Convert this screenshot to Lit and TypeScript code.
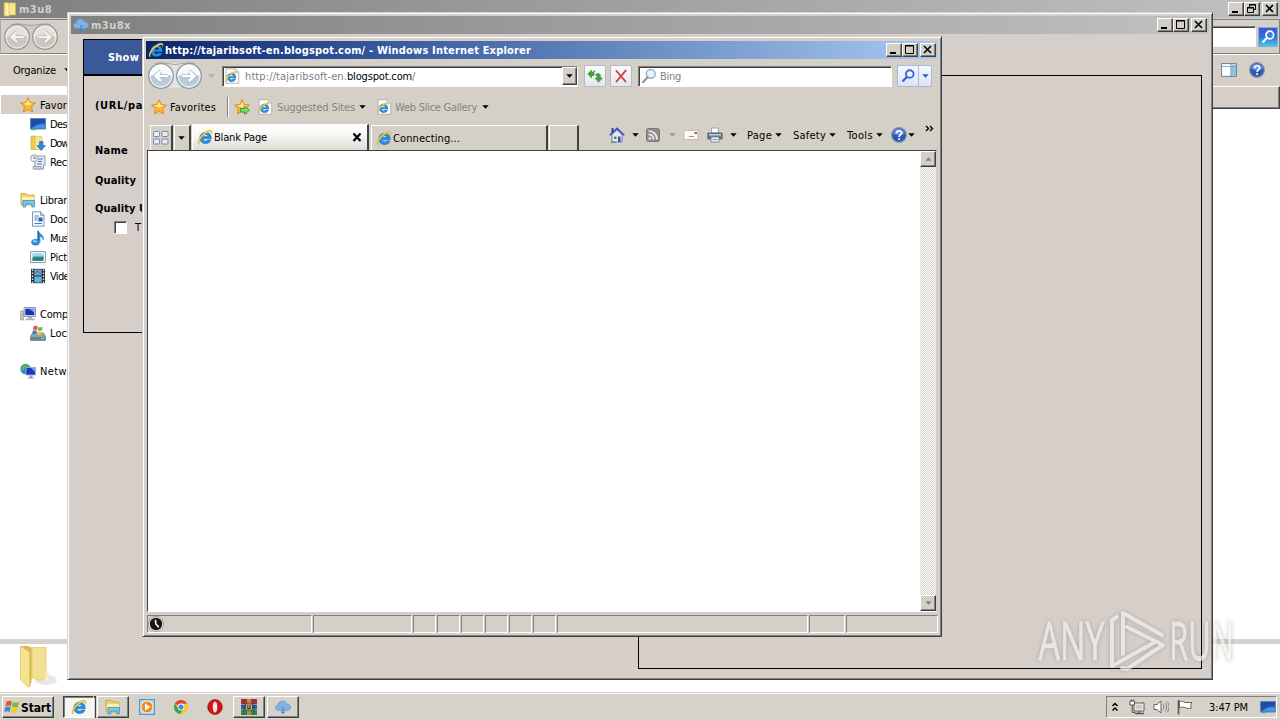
import { LitElement, html, svg, css, TemplateResult, SVGTemplateResult } from "lit";
import { customElement, property } from "lit/decorators.js";
import { classMap } from "lit/directives/class-map.js";

/** A single-line label that tracks its letters so that it fills a given width. */
@customElement("fit-label")
class FitLabel extends LitElement {
  @property({ type: Number }) w = 0;
  static styles = css`
    :host { display: block; flex: none; white-space: pre; padding-top: 1px; margin-bottom: -1px; }
    .t { display: inline-block; }
  `;
  render() {
    return html`<span class="t"><slot></slot></span>`;
  }
  updated() {
    const span = this.renderRoot.querySelector(".t") as HTMLElement;
    const n = (this.textContent || "").length;
    this.style.width = this.w + "px";
    span.style.letterSpacing = "0px";
    const natural = span.getBoundingClientRect().width;
    if (n && natural) span.style.letterSpacing = (this.w - natural) / n + "px";
  }
}

const star = svg`<path d="M8 .8l2.200 4.700 5.200.6-3.800 3.600 1 5.200L8 12.400 3.400 14.900l1-5.200L.6 6.100l5.200-.6z" fill="#fcb92c" stroke="#d9861a" stroke-width=".9"/><path d="M8 2.600l1.500 3.500 3.700.5L8 8.600 2.800 6.600l3.700-.5z" fill="#ffe98c"/>`;
const eGlyph = svg`<path d="M14.3 9.8H6.2c.1 1.5 1.1 2.3 2.4 2.3.9 0 1.6-.4 2-1.1h3.4c-.8 2.3-2.8 3.6-5.4 3.6-3.4 0-5.8-2.3-5.8-5.7S5.200 3.200 8.600 3.200c3.600 0 5.900 2.500 5.700 6.600zM6.300 7.600h4.700c-.1-1.200-1-2-2.300-2s-2.200.8-2.400 2z" fill="#2492e0" stroke="#0d5fb4" stroke-width=".5"/><path d="M2.400 15.200C-.3 14.600 1 9.800 4.800 5.800 8.500 2 13 .1 14.600 1.600c.8.8.5 2.200-.1 3.600.1-1.300-.1-2-.8-2.300-1.500-.5-5 1.300-7.900 4.400-2.800 3-4.400 6.300-3.400 7.900z" fill="#f9cf3b" stroke="#c99a18" stroke-width=".3"/>`;
const folderWin = svg`<path d="M1 1.500h5l1 1.500h7V13H1z" fill="#f0d468" stroke="#c8a53c" stroke-width=".8"/><path d="M2 5h12v3H2z" fill="#fbf0ac"/><path d="M3 15V8.500h11.500V15h-2.700v-3H5.700v3z" fill="#7cc6ec" stroke="#3e8fc0" stroke-width=".8"/>`;
const screen = svg`<path d="M.5 2.500h15v10.500H.5z" fill="#2467c0" stroke="#5b87b8"/><path d="M1 3h14v4C9 6.500 5 9 1 12z" fill="#1f4ca6"/><path d="M2 12.500c4-4 8-4.500 13-4v4z" fill="#4793e2"/><path d="M1 13.700h5" stroke="#3dbb5a"/>`;
const cloud = svg`<path d="M4 11.500C1.500 11.500.3 10 .4 8.400.5 6.900 1.700 6 2.900 5.900 3.200 3.500 5.100 2 7.500 2c2.200 0 3.800 1.200 4.400 3 2.200 0 3.800 1.300 3.800 3.200 0 2-1.500 3.300-3.700 3.300z" fill="#7fb0e2" stroke="#5f98d2" stroke-width=".6"/><path d="M8 8v6M6.300 12.600 8 14.400l1.700-1.800" fill="none" stroke="#4a80bc" stroke-width="1.100"/>`;
const help = svg`<circle cx="8" cy="8" r="7.400" fill="#2f59b4" stroke="#8a97b4" stroke-width="1.200"/><path d="M2.500 7a5.500 5 0 0 1 11 0C10 8.500 6 8.500 2.500 7z" fill="#7295dc"/><path d="M5.600 6.200C5.600 3 10.600 3 10.600 6c0 1.900-2.500 1.900-2.500 4M8.100 11.200v1.700" fill="none" stroke="#fff" stroke-width="1.700"/>`;

const ICONS: Record<string, SVGTemplateResult> = {
  star, ie: eGlyph, help, cloud, screen, library: folderWin,
  folder: svg`<path d="M2 1.500h5V15H2z" fill="#f3d76a" stroke="#cfae45" stroke-width=".6"/><path d="M7 2h6.500v12H7z" fill="#f8e68f" stroke="#d5b850" stroke-width=".6"/><path d="M3.500 2l3 2v11.500l-3-2.500z" fill="#fff3b4"/>`,
  downloads: svg`<path d="M1 1h5V14.500H1z" fill="#ecca58" stroke="#c9a540" stroke-width=".6"/><path d="M5 1.500h7v13H5z" fill="#f8e792" stroke="#d5b850" stroke-width=".6"/><path d="M9.500 6.500h3.500v4h2.500L11.200 15.500 7 10.500h2.500z" fill="#2c8cdc" stroke="#1762ac" stroke-width=".6"/>`,
  recent: svg`<path d="M5 2h10v9h-1.500v4H4v-3h1z" fill="#e3ebf2" stroke="#8496a8" stroke-width=".9"/><path d="M3 12.500h8V15H3z" fill="#c6d3de" stroke="#8496a8" stroke-width=".7"/><path d="M8 5h5M8 7.500h4M7 10h5" stroke="#5d7ca0"/><circle cx="4" cy="4.200" r="3.400" fill="#f3f6fa" stroke="#8797a8" stroke-width=".9"/><path d="M4 2v2.400h2" fill="none" stroke="#456" stroke-width=".8"/>`,
  doc: svg`<path d="M2.500.8h8L14 4.200v11H2.500z" fill="#f4f9fe" stroke="#6d8db0" stroke-width=".9"/><path d="M10.500.8v3.500H14" fill="#bcd5ee" stroke="#6d8db0" stroke-width=".8"/><path d="M4.500 5h4M4.500 7h3M4.500 9h3M4.500 12.500h7.500" stroke="#5580b4"/><path d="M8.500 6.500H12.500v4h-4z" fill="#2e62a8"/>`,
  music: svg`<path d="M8 .8c1 3.200 6.500 3.700 5.300 9.200-.4-2.200-1.500-3.200-3.300-3.500v5.800z" fill="#2f97e2" stroke="#1668b0" stroke-width=".5"/><path d="M8.200 1v11" stroke="#1668b0" stroke-width="1.600"/><ellipse cx="5.500" cy="12.200" rx="4" ry="3" fill="#2f97e2" stroke="#1668b0" stroke-width=".5"/><ellipse cx="4.800" cy="11.200" rx="2" ry="1" fill="#8fd0fa"/>`,
  picture: svg`<path d="M.6 2.600h14.800v11H.6z" fill="#fff" stroke="#7e9ab4" stroke-width="1"/><path d="M2.500 4.500h11v7.300h-11z" fill="#5fbce6"/><path d="M2.500 9c3-2.500 5 .5 11-1.500v4.300h-11z" fill="#2d7f6e"/><path d="M2.500 5.200h11v1.500h-11z" fill="#b5e2f5"/>`,
  video: svg`<path d="M1 .8h14v14.400H1z" fill="#26303c"/><path d="M4.300 1.500h7.400v6H4.300z" fill="#5aa8d8"/><path d="M4.300 8.500h7.400v6H4.300z" fill="#68b4e2"/><path d="M5 5l3-2 3 3" stroke="#c44b2c" fill="none"/><path d="M2.500 1.500v14M13.500 1.500v14" stroke="#e6edf4" stroke-width="1.300" stroke-dasharray="1.500 1.500"/>`,
  computer: svg`<path d="M.7 5h2.600v9H.7z" fill="#c3d2c0" stroke="#7d8c83" stroke-width=".7"/><path d="M4 1.500h11.500v9H4z" fill="#d8dde6" stroke="#78859c" stroke-width=".8"/><path d="M5.300 2.800h9v6.300h-9z" fill="#1c2fbc"/><path d="M9 2.800h5.300v4z" fill="#7e9bf2"/><path d="M8 11h4v1.600h2.500v1.600h-9v-1.600H8z" fill="#aab3bf"/>`,
  drive: svg`<path d="M2.500 8h11l2 3.500v4H.5v-4z" fill="#8ba6b0" stroke="#5c7784" stroke-width=".7"/><path d="M1 12h14v3H1z" fill="#64848f"/><path d="M11 13.500h3" stroke="#6ef08a" stroke-width="1.200"/><path d="M3.500 1.500C5 .5 6.500.7 7.700 1.500L7 5C6 4.300 4.500 4.300 3 5z" fill="#e8552d"/><path d="M8.500 1.800c1.200.8 2.500.8 4.200 0L12 5.300c-1.500.8-3 .6-4.200 0z" fill="#6fb83a"/><path d="M2.800 5.800c1.500-.8 3-.8 4.100 0l-.8 3.500c-1-.7-2.500-.7-4 0z" fill="#3c7fd8"/><path d="M7.600 6.200c1.300.8 2.600.8 4.200 0L11 9.700c-1.600.7-3 .5-4.100 0z" fill="#f5c02c"/>`,
  network: svg`<circle cx="5.500" cy="6" r="5.200" fill="#2f88cc"/><path d="M2 3c2-2.500 5-2 6.500-1L6.500 5 4 5.500 3 8.500 1 6z" fill="#55b858"/><path d="M6 4.500h9.500v7.500H6z" fill="#1c36c0" stroke="#9cacd4" stroke-width=".9"/><path d="M11 5h4v4z" fill="#7c9af0"/><path d="M9.500 12.500h3v2h1.500v1H8v-1h1.500z" fill="#8f9eb8"/>`,
  iepage: svg`<path d="M2 .8h9.500L14.700 4v11.200H2z" fill="#fff" stroke="#a5a39e" stroke-width=".8"/><path d="M11.500.8V4h3.200" fill="#e9e9e9" stroke="#a5a39e" stroke-width=".7"/><g transform="translate(1 2.600) scale(.76)">${eGlyph}</g>`,
  staradd: svg`${star}<path d="M6.500 9.500h4V7l5 4.200-5 4.300V13h-4z" fill="#7cdc60" stroke="#2f8f2b" stroke-width=".8"/>`,
  refresh: svg`<path d="M.8 6 4.500 2v2.600h1.200c.2-1 1-1.800 2.300-1.800-.8.6-1 1.400-1 2.400v2.300H4.500V10z" fill="#3fa535" stroke="#2b7d27" stroke-width=".5"/><path d="M15.300 10 11.600 14.300 8 10h2V8.600c0-1-.7-1.500-1.700-1.500C9 6 10 5.600 11 5.600c1.600 0 2.400.9 2.400 2.500V10z" fill="#3fa535" stroke="#2b7d27" stroke-width=".5"/>`,
  stop: svg`<path d="M3.500 3l9 10.500M12.700 2.600 3.500 13.500" stroke="#cf3f4a" stroke-width="1.900" stroke-linecap="round"/>`,
  glass: svg`<circle cx="9.800" cy="5.800" r="4.500" fill="#e4f0fa" stroke="#93a9c4" stroke-width="1.300"/><path d="M6.500 9.200 2 14.200" stroke="#8d95a4" stroke-width="2.200" stroke-linecap="round"/>`,
  find: svg`<circle cx="9.800" cy="6" r="3.800" fill="#f1f6ff" stroke="#3263d6" stroke-width="1.900"/><path d="M7 8.800 2.500 13.500" stroke="#3263d6" stroke-width="2.300"/>`,
  findw: svg`<circle cx="9.800" cy="6" r="3.800" fill="#3e7fe6" stroke="#fff" stroke-width="1.700"/><path d="M7 8.800 2.500 13.500" stroke="#fff" stroke-width="2.200"/>`,
  quad: svg`<g fill="#e9edf8" stroke="#7d88a8" stroke-width="1"><rect x=".5" y="1.500" width="6" height="5" rx="1"/><rect x="9" y="1.500" width="6" height="5" rx="1"/><rect x=".5" y="9" width="6" height="5" rx="1"/><rect x="9" y="9" width="6" height="5" rx="1"/></g>`,
  home: svg`<path d="M2.500 1h2v5h-2z" fill="#2f3fa4"/><path d="M3 7.500 8 3l5 4.500V15H3z" fill="#e3e9f8" stroke="#5563a8" stroke-width=".8"/><path d="M.8 8.200 8 1.300l7.200 6.900" fill="none" stroke="#3546b4" stroke-width="1.500"/><path d="M9 9.500h2.500V15H9z" fill="#3b4cab"/><path d="M5 9.500H7.500V12H5z" fill="#4f8c50"/><path d="M2 15.300h5" stroke="#48924a"/>`,
  rss: svg`<rect x="1.500" y="1.500" width="13" height="13" rx="2" fill="#8e8e8e" stroke="#777"/><path d="M3.500 4c5 0 8.500 3.500 8.500 8.500M3.500 7.500c3 0 5 2 5 5" stroke="#eee" stroke-width="1.700" fill="none"/><circle cx="4.800" cy="11.500" r="1.300" fill="#eee"/>`,
  mail: svg`<path d="M1 3.500h14v9H1z" fill="#fbfaf8" stroke="#b9b4ae" stroke-width=".8"/><path d="M11.500 5H14v2h-2.500z" fill="#d04848"/><path d="M6 9.500h5" stroke="#d07878"/>`,
  printer: svg`<path d="M4.500 1h7v5h-7z" fill="#fdfdfd" stroke="#8d97a5" stroke-width=".8"/><path d="M.8 6h14.400v6H.8z" fill="#6d7786" stroke="#4f5a68" stroke-width=".8"/><path d="M2 7h12v1.500H2z" fill="#c7ced8"/><path d="M4 10h8v5H4z" fill="#eaf6ff" stroke="#6a7889" stroke-width=".8"/><path d="M5.500 12.500h5" stroke="#4b9ad8"/>`,
  pane: svg`<path d="M.6 1.600h14.800v12.800H.6z" fill="#fff" stroke="#5d7f9b"/><path d="M10 2.500h5v11.500h-5z" fill="#8cc5dc"/><path d="M1 4.500h14M9.800 2v12" stroke="#77a7c2" stroke-width=".9"/>`,
  clock: svg`<circle cx="8" cy="8" r="7.600" fill="#e8e6e0" stroke="#8c8a86" stroke-width=".7"/><circle cx="8" cy="8" r="6.200" fill="#161616"/><path d="M7.500 3.800 7.800 8l3 3.200" stroke="#fff" stroke-width="1.600" fill="none"/>`,
  flagwin: svg`<path d="M2.500 2.600C4.500 1.200 6.300 1.500 7.800 2.500L6.800 7.200C5.200 6.300 3.200 6.300 1.400 7.300z" fill="#e8532c"/><path d="M8.800 3c1.800 1 3.800 1 6.200-.3L14 7.400c-2.300 1.200-4.400 1-6.200 0z" fill="#76bb3c"/><path d="M1.200 8.300c2-1 3.900-1 5.400 0l-1 4.700c-1.700-1-3.500-1-5.300.2z" fill="#3f86dc"/><path d="M7.600 8.500c1.900 1 4 1 6.200-.1l-1 4.800c-2.200 1-4.500.9-6.200-.1z" fill="#f7c52e"/>`,
  wmp: svg`<rect x=".6" y=".6" width="14.800" height="14.800" fill="#b9dcf4" stroke="#4e97cd" stroke-width="1.200"/><circle cx="8" cy="8" r="6" fill="#f28a1c" stroke="#fff" stroke-width=".8"/><path d="M6 4.600v6.800L11.500 8z" fill="#fff"/>`,
  chrome: svg`<circle cx="8" cy="8" r="7" fill="#f3c932"/><path d="M8 8 1.900 4.500A7 7 0 0 1 14.100 4.700L8 4.800z" fill="#df4632"/><path d="M1.900 4.500A7 7 0 0 0 7.300 15L9.800 10.500 8 8 5 9z" fill="#3aa451"/><circle cx="8" cy="8" r="3.400" fill="#fff"/><circle cx="8" cy="8" r="2.600" fill="#4a86e0"/>`,
  opera: svg`<ellipse cx="8" cy="8" rx="7.300" ry="7.500" fill="#cf1616" stroke="#8c0d0d" stroke-width=".6"/><ellipse cx="8" cy="8" rx="2.300" ry="5.500" fill="#f4e6e6"/>`,
  rar: svg`<path d="M0 0h16v5H0z" fill="#ae2f3f"/><path d="M0 5.500h16v5H0z" fill="#2c58ad"/><path d="M0 11h16v5H0z" fill="#2f8b43"/><path d="M6 0h4v16H6z" fill="#b88940"/><path d="M4.500 5h7v6h-7z" fill="#e6d9b0" stroke="#5b4626"/><path d="M6.300 6v3.500h3.400V6M8 6v3" stroke="#333" fill="none"/><path d="M3 0v16M13 0v16" stroke="#182038" stroke-width=".7" stroke-dasharray="1 1"/>`,
  net: svg`<path d="M5 4h10v8H5z" fill="#fff" stroke="#555"/><path d="M6.500 5.500h7v5h-7z" fill="#c9c9c9"/><path d="M6 14.500h9M10 12v2" stroke="#555" stroke-width="1.300"/><path d="M1 2h4.500v4H1z" fill="#fff" stroke="#555"/><path d="M2.200.3v2M4.300.3v2M3.200 6v7.500h3" stroke="#555" fill="none"/>`,
  sound: svg`<path d="M1 5.500h3L8 2v12l-4-3.500H1z" fill="#fff" stroke="#555" stroke-width=".9"/><path d="M10 5.500c1.200 1.500 1.200 3.500 0 5M12 3.800c2.200 2.500 2.200 6 0 8.400M14 2.500c2.700 3.500 2.700 7.500 0 11" stroke="#777" fill="none" stroke-width=".9"/>`,
  flag: svg`<path d="M1.500 1v14.500" stroke="#555" stroke-width="1.600"/><path d="M2.500 2.500c2.500-1 4 .2 5.500 1h7L13.500 6.500l1 2.500c-2.500 1-4.500.5-6-.3-2-.8-4-.8-6 0z" fill="#fff" stroke="#555" stroke-width=".9"/>`,
  chevrons: svg`<path d="M5.500 7 8 4.500 10.500 7M5.500 11.500 8 9l2.500 2.500" fill="none" stroke="#000" stroke-width="1.500"/>`,
  close: svg`<path d="M4.500 4.500l7 7.500M11.500 4.500l-7 7.500" stroke="#000" stroke-width="2.200"/>`,
  more: svg`<path d="M4 5l2.500 2.500L4 10M8 5l2.500 2.500L8 10" fill="none" stroke="#000" stroke-width="1.400"/>`,
};

const icon = (name: string, cls = "") =>
  html`<svg class="ic ${cls}" viewBox="0 0 16 16">${ICONS[name]}</svg>`;

const arrow = (cls = "") =>
  html`<svg class="arr ${cls}" viewBox="0 0 7 4"><path d="M.3 .2h6.400L3.500 3.700z" fill="currentColor"/></svg>`;

const caption = (mid: "max" | "restore") => html`
  <div class="caps">
    <svg class="cap" viewBox="0 0 14 12"><path d="M3 9h6" stroke="#000" stroke-width="2"/></svg>
    <svg class="cap" viewBox="0 0 14 12">${mid === "max"
      ? svg`<path d="M2.500 1.500h8v8h-8zM2 2h9" fill="none" stroke="#000"/>`
      : svg`<path d="M4.500 4V1.500h6v5H8.500M4 2h7M2.500 4.500h6v5h-6zM2 5h7" fill="none" stroke="#000"/>`}</svg>
    <svg class="cap gap" viewBox="0 0 14 12"><path d="M3 2l7 7M10 2 3 9" stroke="#000" stroke-width="1.600"/></svg>
  </div>`;

const travel = (dim: boolean) => {
  const edge = dim ? "#9a9894" : "#8b97a4";
  const hi = dim ? "#e3e1dc" : "#f6fafd";
  const lo = dim ? "#c9c6c0" : "#bccbd9";
  const pen = dim ? "#f2f1ee" : "#ffffff";
  const rim = dim ? "#b5b3ae" : "#9fb3c6";
  return html`<svg class="travel" viewBox="0 0 56 30">
    <path d="M6 4q22-4 44 0v20q-22 6-44 0z" fill=${dim ? "#cfccc6" : "#e2e2e0"} />
    <path d="M8 2.500q8-1.500 12 0 8 2 16 0 6-1.500 12 0" fill="none" stroke="#a7a5a1"/>
    ${[14, 42].map((cx) => svg`
      <circle cx=${cx} cy="15" r="12.300" fill=${hi} stroke=${edge} stroke-width="1.300"/>
      <path d=${`M${cx - 11} 15a11 11 0 0 0 22 0q-11-4-22 0z`} fill=${lo}/>
      <circle cx=${cx} cy="15" r="10.800" fill="none" stroke="#fff" stroke-opacity=".6"/>`)}
    <path d="M21 15H9M14 10 8.700 15l5.300 5M35 15h12M42 10l5.300 5-5.300 5" fill="none" stroke=${rim} stroke-width="4"/>
    <path d="M21 15H9M14 10 8.700 15l5.300 5M35 15h12M42 10l5.300 5-5.300 5" fill="none" stroke=${pen} stroke-width="2.600"/>
  </svg>`;
};

type Row = { t: string; i: string; w: number; child?: boolean; sel?: boolean } | null;
const TREE: Row[] = [
  { t: "Favor", i: "star", w: 27, sel: true },
  { t: "Des", i: "screen", w: 17, child: true },
  { t: "Dow", i: "downloads", w: 18, child: true },
  { t: "Rec", i: "recent", w: 17, child: true },
  null,
  { t: "Librar", i: "library", w: 27 },
  { t: "Doc", i: "doc", w: 18, child: true },
  { t: "Mus", i: "music", w: 18, child: true },
  { t: "Pict", i: "picture", w: 17, child: true },
  { t: "Vide", i: "video", w: 19, child: true },
  null,
  { t: "Comp", i: "computer", w: 28 },
  { t: "Loc", i: "drive", w: 17, child: true },
  null,
  { t: "Netw", i: "network", w: 27 },
];

const STATUS = [165, 99, 23, 23, 23, 23, 23, 23, 251, 36, 92];

@customElement("app-root")
class AppRoot extends LitElement {
  static styles = css`
    :host { display: block; position: relative; width: 1280px; height: 720px; overflow: hidden; background: #fff;
      font: 11px/14px "DejaVu Sans Condensed", "DejaVu Sans", sans-serif; color: #000; }
    * { box-sizing: border-box; }
    .ic { width: 16px; height: 16px; flex: none; display: block; }
    .arr { width: 7px; height: 4px; flex: none; display: block; }
    .row { display: flex; align-items: center; }
    .grow { flex: 1; }
    .title { display: flex; align-items: center; height: 18px; font-weight: bold; flex: none; }
    .title.off { background: linear-gradient(90deg, #808080, #c1c1c1); color: #d4d0c8; }
    .caps { display: flex; margin-left: auto; }
    .cap { width: 16px; height: 14px; background: #d4d0c8; border: 1px solid; border-color: #fff #404040 #404040 #fff;
      box-shadow: inset -1px -1px #808080; }
    .cap.gap { margin-left: 2px; }
    .travel { width: 56px; height: 30px; flex: none; display: block; }
    .sunk { background: #fff; border: 1px solid; border-color: #808080 #fff #fff #808080; box-shadow: inset 1px 1px #404040; }

    .explorer { display: flex; flex-direction: column; height: 693px; }
    .explorer .title { padding: 0 2px 0 2px; }
    .explorer .title .ic { margin-right: 1px; }
    .e-nav { height: 35px; margin-top: 1px; background: #d4d0c8; border: 1px solid #808080; border-left-color: #aaa;
      padding: 0 1px 0 2px; box-shadow: 0 -1px #d4d0c8; }
    .e-field { width: 300px; height: 21px; margin-left: auto; }
    .e-go { width: 20px; height: 20px; margin-left: 2px; border: 1px solid #8ca8d8; background: linear-gradient(#3a58d4, #2d74dc 50%, #48c4ee); padding: 1px; }
    .e-tools { height: 32px; background: #d6cfc8; border-top: 1px solid #fff; padding: 0 15px 2px 13px; }
    .e-tools .arr { margin-left: 8px; }
    .e-tools .pane { margin-left: auto; margin-right: 12px; }
    .e-body { flex: 1; display: flex; justify-content: space-between; }
    .tree { width: 68px; padding: 9px 0 0 1px; }
    .node { display: flex; align-items: center; height: 19px; padding-left: 19px; gap: 4px; }
    .node.child { padding-left: 29px; }
    .node.sel { background: #d5cfc8; }
    .head { width: 68px; height: 23px; background: #d6cfc8; border: 1px solid; border-color: #fff #404040 #404040 #fff; box-shadow: inset -1px -1px #808080; }
    .e-foot { height: 54px; border-top: 5px solid #d6d2cb; padding: 0 0 0 19px; }
    .bigfolder { width: 38px; height: 44px; display: block; }

    .app { position: absolute; left: 67px; top: 12px; width: 1146px; height: 668px; background: #d6cec9;
      border: 1px solid; border-color: #d4d0c8 #404040 #404040 #d4d0c8; box-shadow: inset 1px 1px #fff, inset -1px -1px #808080; padding: 3px; }
    .app .title { padding: 0 2px; }
    .app .title .ic { margin-right: 2px; }
    .app-body { display: flex; justify-content: space-between; height: 642px; padding: 5px 7px 0 12px; }
    .form { width: 300px; height: 294px; border: 1px solid #000; }
    .show { height: 36px; background: #3b5998; color: #fff; border-bottom: 2px solid #000; padding-left: 24px; font-weight: bold; }
    .lines { padding: 0 11px; display: flex; flex-direction: column; font-weight: bold; }
    .l1 { margin-top: 22px; } .l2 { margin-top: 31px; } .l3 { margin-top: 16px; } .l4 { margin-top: 14px; }
    .check { display: flex; align-items: center; gap: 8px; margin: 5px 0 0 19px; font-weight: normal; height: 14px; }
    .box { width: 13px; height: 13px; }
    .log { width: 564px; height: 594px; border: 1px solid #000; margin: 36px 0 0 0; }

    .ie { position: absolute; left: 142px; top: 36px; width: 800px; height: 601px; background: #d4d0c8; display: flex; flex-direction: column;
      border: 1px solid; border-color: #d4d0c8 #404040 #404040 #d4d0c8; box-shadow: inset 1px 1px #fff, inset -1px -1px #808080; padding: 4px 4px 2px 3px; }
    .ie .title { background: linear-gradient(90deg, #0a246a, #2f5097 25%, #a6caf0); color: #fff; padding: 0 1px 0 2px; }
    .ie .title .ic { margin-right: 1px; }
    .i-nav { height: 34px; padding-left: 1px; flex: none; }
    .i-nav .dd { color: #b3afa8; margin: 0 7px 0 5px; }
    .addr { width: 356px; height: 21px; padding: 1px 0 1px 1px; color: #808080; display: flex; align-items: center; }
    .addr .ic { margin-right: 5px; }
    .addr .dark { color: #000; }
    .drop { width: 15px; height: 18px; margin-left: auto; background: #d4d0c8; border: 1px solid; border-color: #fff #404040 #404040 #fff;
      box-shadow: inset -1px -1px #808080; display: grid; place-items: center; color: #000; }
    .btn { height: 22px; width: 22px; border: 1px solid #b4b9c2; background: linear-gradient(#fafbfc, #e3e7ee); border-radius: 2px; display: grid; place-items: center; }
    .btn.a { margin-left: 6px; } .btn.s { margin: 0 6px 0 4px; }
    .search { width: 254px; height: 21px; padding-left: 2px; color: #808080; display: flex; align-items: center; gap: 3px; }
    .go { width: 35px; height: 22px; margin-left: 5px; border: 1px solid #aab8d4; background: linear-gradient(#f5f8ff, #dbe4f5); border-radius: 2px;
      display: grid; grid-template-columns: 20px 1fr; place-items: center; color: #2a5fb0; }
    .go .part { height: 20px; width: 100%; display: grid; place-items: center; border-left: 1px solid #aab8d4; }
    .i-fav { height: 28px; padding: 0 0 0 5px; flex: none; color: #85827d; }
    .i-fav .arr { color: #000; }
    .i-fav .first { color: #000; margin-left: 3px; }
    .sep { width: 2px; height: 20px; border-left: 1px solid #808080; border-right: 1px solid #fff; margin: 0 5px 0 11px; }
    .m1 { margin-left: 1px; } .m2 { margin-left: 2px; } .m3 { margin-left: 3px; } .m4 { margin-left: 4px; } .m5 { margin-left: 5px; }
    .m6 { margin-left: 6px; } .m7 { margin-left: 7px; } .m8 { margin-left: 8px; } .m10 { margin-left: 10px; } .m11 { margin-left: 11px; } .m16 { margin-left: 16px; }
    .i-tabs { height: 29px; flex: none; display: flex; align-items: flex-end; padding-left: 4px; }
    .tab { height: 25px; display: flex; align-items: center; border-left: 1px solid #fff; border-top: 1px solid #fff; border-right: 2px solid #404040; flex: none; }
    .tab.q { width: 23px; padding-left: 2px; } .tab.d { width: 17px; padding-left: 3px; margin-left: 1px; }
    .tab.on { width: 177px; height: 26px; margin-left: 1px; padding: 0 2px 1px 4px; background: linear-gradient(#fff, #f8f7f5 40%, #dedbd5); gap: 1px; }
    .tab.two { width: 177px; margin-left: 2px; padding-left: 4px; gap: 1px; }
    .tab.new { width: 30px; margin-left: 1px; }
    .tab .x { margin-left: auto; }
    .cmd { display: flex; align-items: center; height: 30px; margin-left: 30px; }
    .cmd .dim { color: #9b9893; }
    .cmd .up { align-self: flex-start; margin-top: 1px; }
    .view { flex: 1; margin: 0 0 0 1px; display: flex; background: #fff; border: 1px solid; border-color: #404040 #d4d0c8 #fff #404040; }
    .bar { width: 16px; margin-left: auto; display: flex; flex-direction: column; justify-content: space-between;
      background: repeating-conic-gradient(#fff 0 25%, #d4d0c8 0 50%) 0 0 / 2px 2px; }
    .sb { height: 16px; width: 16px; background: #d4d0c8; border: 1px solid; border-color: #fff #404040 #404040 #fff; box-shadow: inset -1px -1px #808080;
      display: grid; place-items: center; color: #808080; }
    .flip { transform: rotate(180deg); }
    .status { display: flex; gap: 1px; height: 22px; padding: 3px 0 0 1px; flex: none; }
    .cell { height: 18px; border: 1px solid; border-color: #808080 #fff #fff #808080; display: flex; align-items: center; flex: none; }

    .bar-bottom { position: absolute; left: 0; top: 692px; width: 1280px; height: 28px; background: #d6d2c9; border-top: 1px solid #cfccc6;
      box-shadow: inset 0 1px #fff; display: flex; align-items: center; padding: 1px 3px 0 2px; }
    .tb { height: 22px; border: 1px solid; border-color: #fff #404040 #404040 #fff; box-shadow: inset -1px -1px #808080; display: flex; align-items: center; justify-content: center; flex: none; width: 32px; }
    .tb.start { width: 52px; margin-right: 9px; justify-content: flex-start; font-weight: bold; font-size: 12px; gap: 1px; padding-left: 1px; }
    .tb.down { border-color: #404040 #fff #fff #404040; box-shadow: inset 1px 1px #808080; background: #f6f5f2; width: 31px; }
    .slot { width: 34px; display: grid; place-items: center; }
    .stack { width: 2px; height: 22px; border-right: 1px solid #404040; border-top: 2px solid #404040; margin-right: 1px; }
    .tray { margin-left: auto; width: 171px; height: 22px; border: 1px solid; border-color: #808080 #fff #fff #808080; display: flex; align-items: center; }

    .mark { position: absolute; left: 1035px; top: 604px; width: 204px; height: 72px; opacity: .68; pointer-events: none;
      display: flex; align-items: center; filter: drop-shadow(0 0 2px rgba(110, 104, 98, .6)); color: #f3f1ef; }
    .word { width: 74px; height: 72px; display: flex; justify-content: center; align-items: center; flex: none;
      font: 53px/72px "Open Sans", "Noto Sans", sans-serif; -webkit-text-stroke: .8px #f3f1ef; }
    .word span { flex: none; transform: scaleX(.64); white-space: nowrap; }
    .word .run { transform: scaleX(.58); }
    .play { width: 56px; height: 64px; flex: none; overflow: visible; }
  `;

  private node(r: Row): TemplateResult {
    if (!r) return html`<div class="node"></div>`;
    return html`<div class=${classMap({ node: true, child: !!r.child, sel: !!r.sel })}>
      ${icon(r.i)}<fit-label .w=${r.w}>${r.t}</fit-label></div>`;
  }

  private explorer() {
    return html`<section class="explorer">
      <div class="title off">${icon("folder")}<fit-label .w=${33}>m3u8</fit-label>${caption("restore")}</div>
      <div class="e-nav row">${travel(true)}<div class="sunk e-field"></div><div class="e-go">${icon("findw")}</div></div>
      <div class="e-tools row"><fit-label .w=${43}>Organize</fit-label>${arrow()}${icon("pane", "pane")}${icon("help")}</div>
      <div class="e-body"><div class="tree">${TREE.map((r) => this.node(r))}</div><div class="head"></div></div>
      <div class="e-foot"><svg class="bigfolder" viewBox="0 0 38 44">
        <ellipse cx="27" cy="36" rx="11" ry="5" fill="#ddd" opacity=".7"/>
        <path d="M12 3h15.500v30L22 37l-11-3z" fill="#ecd47a"/><path d="M14 4h12v30l-12 1z" fill="#f3e094"/>
        <path d="M1.500 2 11 8v34.500L9 43 1.500 36z" fill="#f6e391" stroke="#dfc467" stroke-width=".8"/>
        <path d="M1.500 2h8l3 2v34l-2 4V8z" fill="#d9b954"/><path d="M26.500 26l3 2v7l-3 2z" fill="#f7efc8"/></svg></div>
    </section>`;
  }

  private app() {
    return html`<section class="app">
      <div class="title off">${icon("cloud")}<fit-label .w=${40}>m3u8x</fit-label>${caption("max")}</div>
      <div class="app-body">
        <div class="form">
          <div class="show row"><fit-label .w=${31}>Show</fit-label></div>
          <div class="lines">
            <fit-label class="l1" .w=${48}>(URL/pa</fit-label>
            <fit-label class="l2" .w=${33}>Name</fit-label>
            <fit-label class="l3" .w=${41}>Quality</fit-label>
            <fit-label class="l4" .w=${52}>Quality U</fit-label>
            <div class="check"><div class="box sunk"></div><fit-label .w=${7}>T</fit-label></div>
          </div>
        </div>
        <div class="log"></div>
      </div>
    </section>`;
  }

  private ie() {
    return html`<section class="ie">
      <div class="title">${icon("ie")}<fit-label .w=${366}>http://tajaribsoft-en.blogspot.com/ - Windows Internet Explorer</fit-label>${caption("max")}</div>
      <div class="i-nav row">${travel(false)}${arrow("dd")}
        <div class="addr sunk">${icon("iepage")}<fit-label .w=${102}>http://tajaribsoft-en.</fit-label><fit-label class="dark" .w=${65}>blogspot.com</fit-label><fit-label .w=${4}>/</fit-label>
          <div class="drop">${arrow()}</div></div>
        <div class="btn a">${icon("refresh")}</div><div class="btn s">${icon("stop")}</div>
        <div class="search sunk">${icon("glass")}<fit-label .w=${21}>Bing</fit-label></div>
        <div class="go">${icon("find")}<div class="part">${arrow()}</div></div>
      </div>
      <div class="i-fav row">${icon("star")}<fit-label class="first" .w=${46}>Favorites</fit-label><div class="sep"></div>
        ${icon("staradd")}${icon("iepage", "m7")}<fit-label class="m4" .w=${78}>Suggested Sites</fit-label>${arrow("m4")}
        ${icon("iepage", "m10")}<fit-label class="m3" .w=${82}>Web Slice Gallery</fit-label>${arrow("m5")}</div>
      <div class="i-tabs">
        <div class="tab q">${icon("quad")}</div><div class="tab d">${arrow()}</div>
        <div class="tab on">${icon("ie")}<fit-label .w=${53}>Blank Page</fit-label>${icon("close", "x")}</div>
        <div class="tab two">${icon("ie")}<fit-label .w=${67}>Connecting...</fit-label></div><div class="tab new"></div>
        <div class="cmd">${icon("home")}${arrow("m7")}${icon("rss", "m6")}${arrow("dim m8")}${icon("mail", "m7")}${icon("printer", "m8")}${arrow("m7")}
          <fit-label class="m10" .w=${25}>Page</fit-label>${arrow("m3")}<fit-label class="m11" .w=${33}>Safety</fit-label>${arrow("m3")}
          <fit-label class="m11" .w=${26}>Tools</fit-label>${arrow("m3")}${icon("help", "m8")}${arrow("m1")}${icon("more", "up m7")}</div>
      </div>
      <div class="view"><div class="bar"><div class="sb">${arrow("flip")}</div><div class="sb">${arrow()}</div></div></div>
      <div class="status">${STATUS.map((w, i) => html`<div class="cell" style="width:${w}px">${i ? "" : icon("clock")}</div>`)}</div>
    </section>`;
  }

  private taskbar() {
    return html`<footer class="bar-bottom">
      <div class="tb start">${icon("flagwin")}<fit-label .w=${30}>Start</fit-label></div>
      <div class="tb down">${icon("ie")}</div><div class="stack"></div>
      <div class="tb">${icon("library")}</div>
      <div class="slot m1">${icon("wmp")}</div><div class="slot">${icon("chrome")}</div><div class="slot">${icon("opera")}</div>
      <div class="tb m1">${icon("rar")}</div><div class="m2 tb">${icon("cloud")}</div>
      <div class="tray">${icon("chevrons")}${icon("net", "m6")}${icon("sound", "m8")}${icon("flag", "m8")}
        <fit-label class="m16" .w=${39}>3:47 PM</fit-label><span class="grow"></span>${icon("screen")}</div>
    </footer>`;
  }

  render() {
    return html`${this.explorer()}${this.app()}${this.ie()}${this.taskbar()}
      <div class="mark"><div class="word"><span>ANY</span></div>
        <svg class="play" viewBox="0 0 56 64" fill="none" stroke="#f3f1ef" stroke-width="4" stroke-linejoin="round" stroke-linecap="round">
          <path d="M8 9 3 12v46L46 34M14 46V5l39 22M18 19l36 18L18 61l-5-1"/></svg>
        <div class="word"><span class="run">RUN</span></div></div>`;
  }
}
